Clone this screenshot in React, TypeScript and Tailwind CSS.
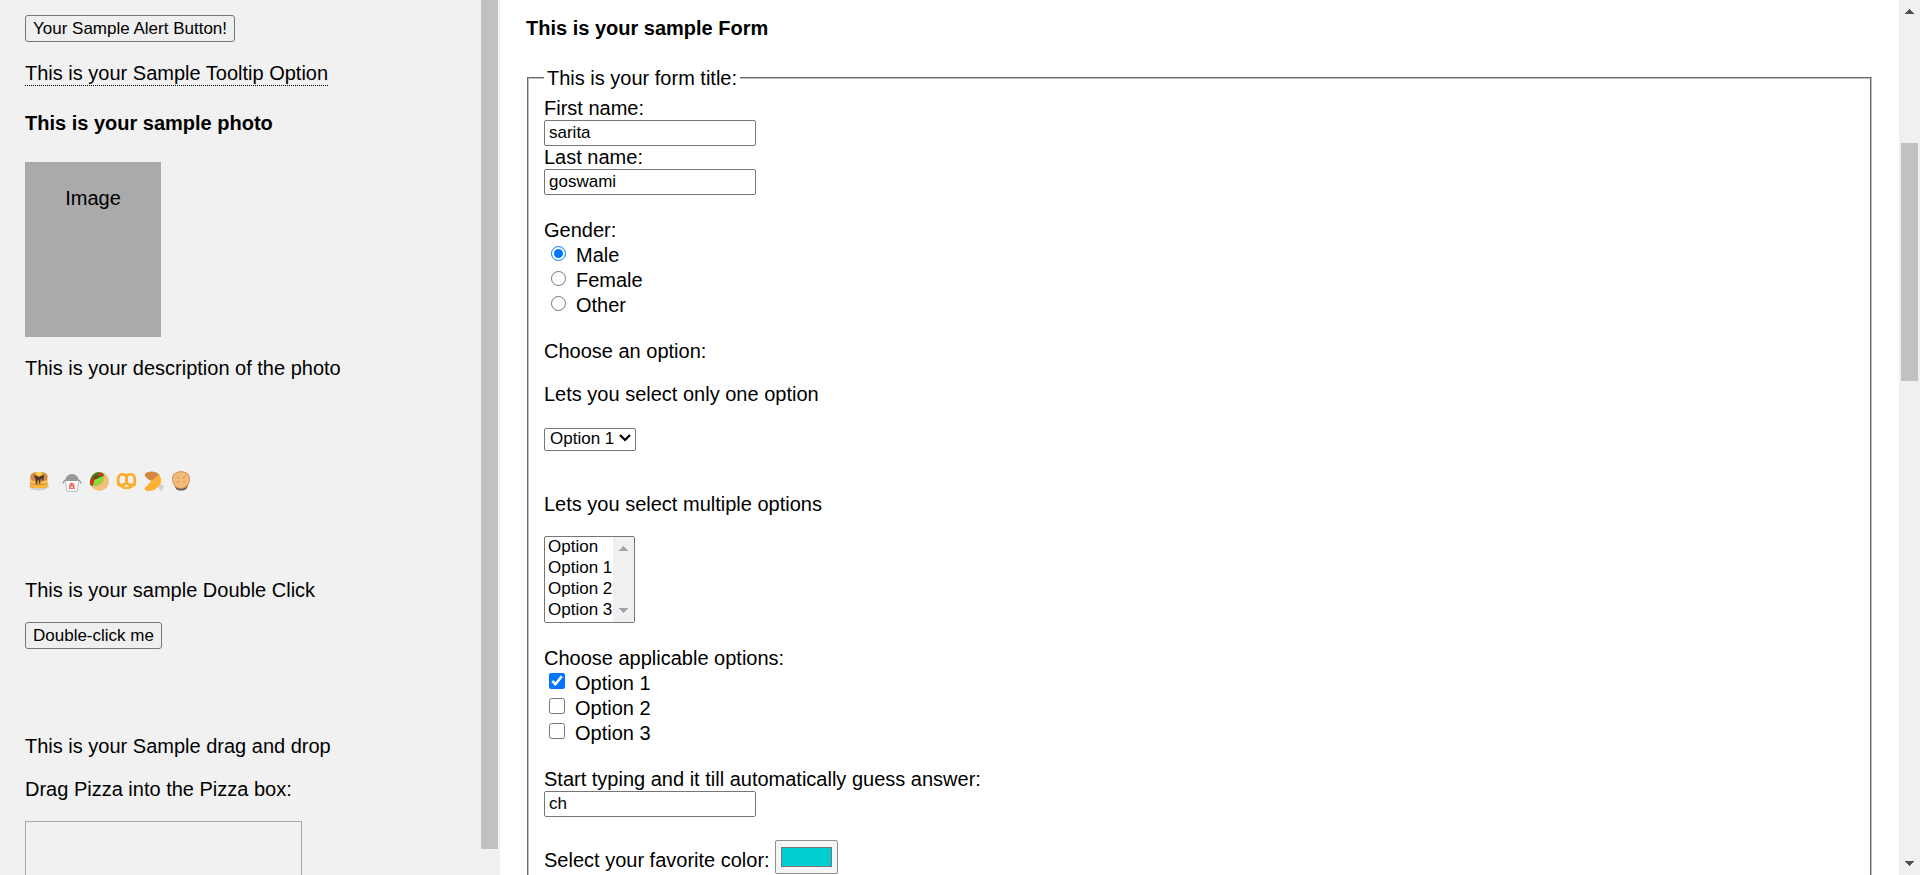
import React from "react";

function Arrow({ down = false, className }: { down?: boolean; className: string }) {
  return (
    <svg width="9" height="5" viewBox="0 0 9 5" className={className} shapeRendering="crispEdges" fill="currentColor" aria-hidden="true">
      {down ? (
        <path d="M0 0h9v1H8v1H7v1H6v1H5v1H4V4H3V3H2V2H1V1H0z" />
      ) : (
        <path d="M4 0h1v1h1v1h1v1h1v1h1v1H0V4h1V3h1V2h1V1h1z" />
      )}
    </svg>
  );
}

function Pancakes() {
  return (
    <svg width="20" height="20" viewBox="0 0 20 20" aria-hidden="true">
      <ellipse cx="10" cy="15" rx="10" ry="4.6" fill="#d0d0d0" />
      <rect x="1" y="10" width="17.6" height="7" rx="3.4" fill="#c8843f" />
      <path d="M1 12.5q8.800 3.500 17.600 0v1q0 3.500-4 3.500h-9.600q-4 0-4-3.500z" fill="#ffb636" />
      <rect x="1.400" y="6" width="17" height="6.800" rx="3.300" fill="#c8843f" />
      <path d="M1.400 8.700q8.500 3.800 17 0v.8q0 3.300-4 3.300h-9q-4 0-4-3.300z" fill="#ffc04d" />
      <path d="M1.200 5.300Q1.600 1 10 1t8.600 4.300v1.400Q18 9.500 10 9.800 2 9.500 1.200 6.700z" fill="#d58b42" />
      <path d="M4.500 4.800Q10 2.500 15 4.800q.5 1.700-.5 2.500v2q-1 1-1.500-.3V8.200q-1-.8-1.600.2V12q-.7 1-1.500 0V9.500q-1-1-1.500.2v3q-1 1-1.700-.2V8q-2-1-1.200-3.200z" fill="#59352b" />
      <path d="M6.800 2.200Q10-1 13.200 2.200q1 2-3.200 3.600Q5.800 4.200 6.800 2.200z" fill="#ffd340" />
    </svg>
  );
}

function Takeout() {
  return (
    <svg width="20" height="20" viewBox="0 0 20 20" overflow="visible" aria-hidden="true">
      <path d="M3 10.500Q3.500 3 10 3T17 10.500z" fill="#999" />
      <path d="M3 8.700.8 12.400M17 8.700l2.200 3.700" stroke="#999" strokeWidth="1.200" fill="none" />
      <path d="M2.800 10h14.400L15.500 20.800h-11z" fill="#b9bdc0" />
      <path d="M3.800 10h12.400l-1.500 9.800H5.300z" fill="#fff" />
      <path d="M9.800 11.500v3M7.500 14.300Q9.800 11 12.200 14.300M7 15h5.800M8 17.200v-2M11.600 17.200v-2M6.800 17.300h6.200" stroke="#f04848" strokeWidth="1.100" fill="none" />
    </svg>
  );
}

function Flatbread() {
  return (
    <svg width="20" height="20" viewBox="0 0 20 20" aria-hidden="true">
      <circle cx="10.400" cy="10.300" r="9.600" fill="#f2c07c" />
      <path d="M1.200 9Q3 2.500 9 1l5 1 1.200 3L4.500 15Q.8 15 .8 12z" fill="#2f8517" />
      <path d="M8.500 2.200 13.200 2l.8 2.500-4 .8zM1.200 9.500 4.500 7.500l1 2-1.500 4.500-3-1z" fill="#e02c22" />
      <path d="M4 6.800 7 4l2.500 2.200L5.600 9z" fill="#a52a1c" />
      <path d="M5.500 8.800 15 4.800l-1.500 7-7.200 3.200-2.500-.2z" fill="#8adb3a" />
      <path d="m15.500 5.500-2 6.500-7.800 3.800" stroke="#dda35b" strokeWidth=".7" fill="none" />
    </svg>
  );
}

function Pretzel() {
  return (
    <svg width="21" height="20" viewBox="0 0 20 20" aria-hidden="true">
      <g fill="none" strokeLinecap="round" strokeWidth="2.600">
        <path d="M2.600 14C.8 10 1 3.200 6 3.200c4.500 0 5.300 5.800 3 9.300-1.500 2-4 1.900-7.200 1.300M17.400 14C19.200 10 19 3.200 14 3.200c-4.500 0-5.300 5.800-3 9.300 1.500 2 4 1.900 7.200 1.300" stroke="#ffa826" />
        <path d="M3.500 14.500q6.500 5 13 0" stroke="#ffb02e" />
      </g>
    </svg>
  );
}

function Drumstick() {
  return (
    <svg width="20" height="20" viewBox="0 0 20 20" aria-hidden="true">
      <path d="m14 15 2.500-2 3.500 2.600-1 1.400-.8 2.500-2 .3z" fill="#ced2d4" />
      <path d="M15.500 3.800C17.500 7.500 17.800 11.500 15.500 14c-3 4.800-9 7.200-13.800 5.500Q-.2 18.200 1.200 16.500L7.500 10z" fill="#ffb02e" />
      <path d="M.8 3.200C3.500-.8 12-.5 15.500 3.800L7.500 10Q.5 6.800.8 3.200z" fill="#d3883e" />
    </svg>
  );
}

function Potato() {
  return (
    <svg width="20" height="20" viewBox="0 0 20 20" aria-hidden="true">
      <path d="M3.500 14q1 5.200 4.500 5.500h4q4-.3 5-5.500z" fill="#646464" />
      <path d="M10 .3c4.500 0 8 2.500 8.800 6 .7 4-1.500 11.700-8.800 11.700S.5 10.300 1.200 6.300C2 2.800 5.500.3 10 .3z" fill="#d38b48" />
      <path d="M10 1.300c4.200 0 7.200 2 7.900 5.200.7 4-1.700 10.500-7.900 10.500S1.400 10.500 2.100 6.500c.7-3.200 3.700-5.200 7.900-5.200z" fill="#f2bc78" />
      <path d="m6 5.500 2.300 2M14 5.200l-2.300 2.300M6 11.500l2.200-1.700M14 11.500l-2-1.700" stroke="#d38b48" strokeWidth="1" fill="none" />
    </svg>
  );
}

const buttonClass = "h-[27px] self-start whitespace-nowrap rounded-[3px] border border-[#767676] bg-[#efefef] px-[7px] text-[17px] leading-5";

function Sidebar() {
  return (
    <aside className="flex w-[500px] shrink-0 overflow-hidden bg-[#f1f1f1]">
      <div className="flex grow flex-col px-[25px] pt-[15px] [&>*]:shrink-0">
        <button type="button" className={buttonClass}>Your Sample Alert Button!</button>
        <div className="mt-5 self-start border-b border-dotted border-black">This is your Sample Tooltip Option</div>
        <h4 className="mt-[26px] font-bold">This is your sample photo</h4>
        <div className="mt-[27px] h-[175px] w-[136px] bg-[#aaa] pt-[25px] text-center">Image</div>
        <p className="mt-5">This is your description of the photo</p>
        <div className="mt-[91px] flex pl-1">
          <span className="mr-[13px]"><Pancakes /></span>
          <div className="flex gap-[7px]">
            <Takeout />
            <Flatbread />
            <Pretzel />
            <Drumstick />
            <Potato />
          </div>
        </div>
        <p className="mt-[88px]">This is your sample Double Click</p>
        <button type="button" className={`mt-5 ${buttonClass}`}>Double-click me</button>
        <p className="mt-[86px]">This is your Sample drag and drop</p>
        <p className="mt-5">Drag Pizza into the Pizza box:</p>
        <div className="mt-5 h-[100px] w-[277px] border border-[#aaa]" />
      </div>
      <div className="mr-0.5 mb-[26px] w-[17px] shrink-0 bg-[#c1c1c1]" />
    </aside>
  );
}

function TextField({ id, label, value }: { id: string; label: string; value: string }) {
  return (
    <div className="flex flex-col items-start">
      <label htmlFor={id}>{label}</label>
      <input
        id={id}
        type="text"
        defaultValue={value}
        className="h-[26px] w-[212px] rounded-[2px] border border-[#767676] bg-white px-1 text-[17px] leading-5"
      />
    </div>
  );
}

function Choices({ type, title, options }: { type: "radio" | "checkbox"; title: string; options: string[] }) {
  return (
    <div role="group" aria-label={title} className="mt-6">
      <div>{title}</div>
      {options.map((option, index) => (
        <label key={option} className="flex h-[25px] items-start">
          <input
            type={type}
            name={title}
            defaultChecked={index === 0}
            className={type === "radio" ? "mt-1 mr-2.5 ml-[7px] size-[15px]" : "mt-[3px] mr-2.5 ml-[5px] size-4"}
          />
          <span className="mt-0.5">{option}</span>
        </label>
      ))}
    </div>
  );
}

function SampleForm() {
  return (
    <form className="min-w-0 grow overflow-hidden px-[26px] pt-[17px]">
      <h4 className="font-bold">This is your sample Form</h4>
      <fieldset className="mx-px mt-[27px] border-2 border-[#c0c0c0] px-[15px] pb-4 [border-style:groove]">
        <legend className="h-[22px] px-[3px]">This is your form title:</legend>
        <div className="pt-2">
          <TextField id="first" label="First name:" value="sarita" />
          <TextField id="last" label="Last name:" value="goswami" />
        </div>
        <Choices type="radio" title="Gender:" options={["Male", "Female", "Other"]} />
        <p className="mt-[23px]">Choose an option:</p>
        <label htmlFor="single" className="mt-5 block">Lets you select only one option</label>
        <div className="relative mt-5 h-[23px] w-[92px]">
          <select id="single" defaultValue="Option 1" className="h-full w-full appearance-none rounded-[2px] border border-[#767676] bg-white pl-[5px] text-[17px] leading-5">
            <option>Option</option>
            <option>Option 1</option>
            <option>Option 2</option>
            <option>Option 3</option>
          </select>
          <svg width="12" height="8" viewBox="0 0 12 8" className="pointer-events-none absolute top-2 right-[5px]" fill="none" stroke="#000" strokeWidth="2.200" aria-hidden="true">
            <path d="m1 1 5 5 5-5" />
          </svg>
        </div>
        <label htmlFor="multiple" className="mt-11 block">Lets you select multiple options</label>
        <div className="mt-5 flex h-[87px] w-[91px] overflow-hidden rounded-[2px] border border-[#767676] bg-white">
          <select id="multiple" multiple size={4} className="min-w-0 grow overflow-hidden text-[17px] leading-5">
            <option className="h-[21px] p-0 pl-[3px]">Option</option>
            <option className="h-[21px] p-0 pl-[3px]">Option 1</option>
            <option className="h-[21px] p-0 pl-[3px]">Option 2</option>
            <option className="h-[21px] p-0 pl-[3px]">Option 3</option>
          </select>
          <div className="flex w-[21px] shrink-0 flex-col items-center justify-between bg-[#f0f0f0] py-[9px]">
            <Arrow className="text-[#a3a3a3]" />
            <Arrow down className="text-[#a3a3a3]" />
          </div>
        </div>
        <Choices type="checkbox" title="Choose applicable options:" options={["Option 1", "Option 2", "Option 3"]} />
        <div className="mt-[23px]">
          <TextField id="guess" label="Start typing and it till automatically guess answer:" value="ch" />
        </div>
        <div className="mt-[23px] flex items-end gap-[5px]">
          <label htmlFor="color" className="mb-0.5">Select your favorite color:</label>
          <input
            id="color"
            type="color"
            defaultValue="#00ced1"
            className="h-[34px] w-[63px] rounded-[2px] border border-[#8f8f8f] bg-[#f5f5f5] px-[5px] py-[6px] [&::-webkit-color-swatch-wrapper]:p-0 [&::-webkit-color-swatch]:rounded-none [&::-webkit-color-swatch]:border [&::-webkit-color-swatch]:border-solid [&::-webkit-color-swatch]:border-[#777]"
          />
        </div>
      </fieldset>
    </form>
  );
}

export default function App() {
  return (
    <div className="flex h-screen overflow-hidden bg-white font-['Liberation_Sans',Arial,sans-serif] text-[20px] leading-[23px] text-black">
      <Sidebar />
      <SampleForm />
      <div className="flex w-[21px] shrink-0 flex-col items-center bg-[#f0f0f0] py-[9px]">
        <Arrow className="shrink-0 text-[#505050]" />
        <div className="flex w-[17px] grow flex-col">
          <div className="grow-[129]" />
          <div className="grow-[238] bg-[#c1c1c1]" />
          <div className="grow-[480]" />
        </div>
        <Arrow down className="shrink-0 text-[#505050]" />
      </div>
    </div>
  );
}
